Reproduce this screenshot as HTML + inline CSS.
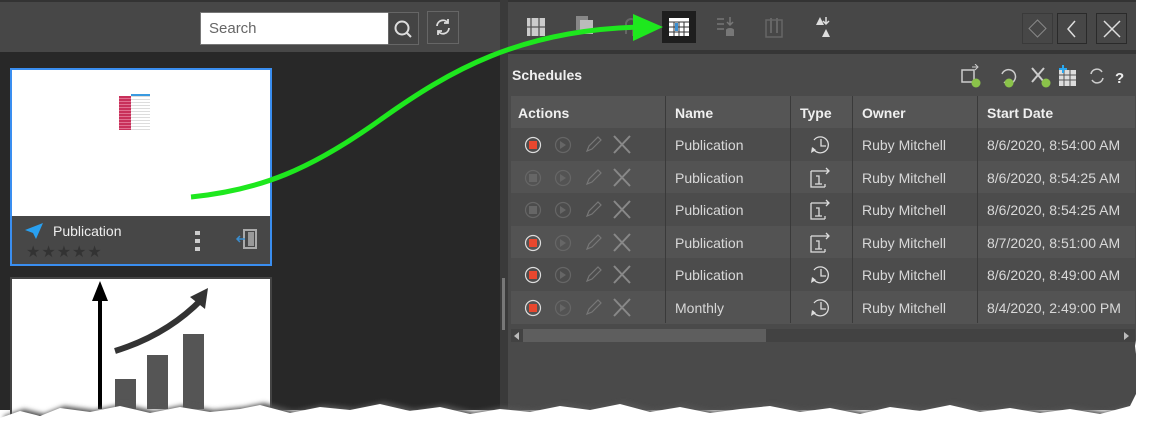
<!DOCTYPE html>
<html><head><meta charset="utf-8"><style>
*{margin:0;padding:0;box-sizing:border-box}
body{width:1167px;height:436px;background:#fff;position:relative;overflow:hidden;font-family:"Liberation Sans",sans-serif}
.abs{position:absolute}
.t{color:#d8d8d8;font-size:14px}
.hd{color:#f0f0f0;font-size:14px;font-weight:bold}
</style></head><body>
<div class="abs" style="left:0;top:0;width:502px;height:410px;background:#282828"></div>
<div class="abs" style="left:0;top:0;width:500px;height:52px;background:#474747;border-top:2px solid #333"></div>
<div class="abs" style="left:200px;top:12px;width:189px;height:33px;background:#fff;border:1px solid #777"></div>
<div class="abs" style="left:209px;top:20px;color:#666;font-size:15px">Search</div>
<div class="abs" style="left:388px;top:12px;width:31px;height:33px;border:1px solid #666;background:#444"></div>
<svg class="abs" style="left:392px;top:18px" width="22" height="22"><circle cx="10" cy="10" r="6.5" fill="none" stroke="#ddd" stroke-width="2"/><line x1="14.5" y1="14.5" x2="19" y2="19" stroke="#ddd" stroke-width="2"/></svg>
<div class="abs" style="left:427px;top:11px;width:32px;height:33px;border:1px solid #666"></div>
<svg class="abs" style="left:433px;top:17px" width="20" height="20"><path d="M4 9a6 6 0 0 1 11-3M16 11a6 6 0 0 1-11 3" fill="none" stroke="#ddd" stroke-width="1.8"/><path d="M15 2v4h-4M5 18v-4h4" fill="none" stroke="#ddd" stroke-width="1.8"/></svg>
<div class="abs" style="left:10px;top:68px;width:262px;height:198px;border:2px solid #3a8ef0;background:#fff"></div>
<div class="abs" style="left:119px;top:96px;width:12px;height:34px;background:repeating-linear-gradient(#c8305a 0 2px,#e07090 2px 3px)"></div>
<div class="abs" style="left:131px;top:96px;width:19px;height:34px;background:repeating-linear-gradient(#ddd 0 1px,#fff 1px 3px)"></div>
<div class="abs" style="left:131px;top:94px;width:19px;height:2px;background:#3a9ae0"></div>
<div class="abs" style="left:12px;top:216px;width:258px;height:48px;background:#474747"></div>
<svg class="abs" style="left:24px;top:222px" width="20" height="18"><path d="M1 8L19 1 12 17 9 11z" fill="#29a0f0"/></svg>
<div class="abs" style="left:53px;top:223px;color:#eee;font-size:14px">Publication</div>
<div class="abs" style="left:26px;top:242px;color:#333;font-size:16px;letter-spacing:1px">★★★★★</div>
<div class="abs" style="left:195px;top:231px;width:5px;height:20px;background:repeating-linear-gradient(#ccc 0 4px,transparent 4px 8px)"></div>
<svg class="abs" style="left:235px;top:228px" width="24" height="22"><rect x="9" y="2" width="12" height="18" fill="none" stroke="#aaa" stroke-width="2"/><rect x="13" y="4" width="6" height="14" fill="#999"/><path d="M2 11h8M5 8l-3 3 3 3" fill="none" stroke="#3a8ed0" stroke-width="1.5"/></svg>
<div class="abs" style="left:10px;top:277px;width:262px;height:140px;border:2px solid #444;background:#fff"></div>
<svg class="abs" style="left:12px;top:279px" width="258" height="130"><path d="M88 130V12" stroke="#000" stroke-width="4"/><path d="M80 22L88 2 96 22z" fill="#000"/><rect x="103" y="100" width="21" height="30" fill="#555"/><rect x="135" y="76" width="21" height="54" fill="#555"/><rect x="171" y="55" width="21" height="75" fill="#555"/><path d="M103 72Q155 56 190 20" fill="none" stroke="#333" stroke-width="6"/><path d="M178 18L196 9 193 30z" fill="#333"/></svg>
<div class="abs" style="left:500px;top:0;width:8px;height:410px;background:#3a3a3a"></div>
<div class="abs" style="left:502px;top:278px;width:3px;height:52px;background:#777"></div>
<div class="abs" style="left:508px;top:0;width:640px;height:410px;background:#4a4a4a"></div>
<div class="abs" style="left:508px;top:0;width:640px;height:54px;background:#474747;border-top:2px solid #333;border-bottom:4px solid #363636"></div>
<svg class="abs" style="left:525px;top:16px" width="22" height="22"><rect x="2" y="2" width="18" height="18" fill="#ccc"/><path d="M6 2v18M2 11h18M14 2v18" stroke="#555" stroke-width="1.3"/></svg>
<svg class="abs" style="left:574px;top:14px" width="22" height="22"><rect x="2" y="2" width="12" height="14" fill="#888"/><rect x="6" y="6" width="13" height="14" fill="#bbb"/></svg>
<svg class="abs" style="left:622px;top:16px" width="22" height="22"><path d="M4 18V8a5 5 0 0 1 10 0" fill="none" stroke="#666" stroke-width="2"/><rect x="10" y="12" width="8" height="8" fill="#665"/></svg>
<div class="abs" style="left:662px;top:11px;width:34px;height:32px;background:#1e1e1e"></div>
<svg class="abs" style="left:669px;top:18px" width="20" height="18"><rect x="0" y="0" width="20" height="18" fill="#fff"/><path d="M0 4h20M5 4v14M10 4v14M15 4v14M0 9h20M0 14h20" stroke="#333" stroke-width="1"/><rect x="6" y="5" width="3" height="8" fill="#3a8ed0"/></svg>
<svg class="abs" style="left:715px;top:16px" width="22" height="22"><path d="M2 3h7M2 8h7M2 13h7" stroke="#777" stroke-width="1.5"/><path d="M15 1v8M12 6l3 3 3-3" stroke="#777" fill="none" stroke-width="1.5"/><ellipse cx="15" cy="14" rx="4" ry="2" fill="#777"/><rect x="11" y="14" width="8" height="6" fill="#777"/></svg>
<svg class="abs" style="left:763px;top:15px" width="22" height="24"><rect x="3" y="5" width="16" height="17" fill="none" stroke="#666" stroke-width="1.5"/><path d="M8 3v15M14 3v15" stroke="#666" stroke-width="2"/></svg>
<svg class="abs" style="left:812px;top:15px" width="22" height="24"><path d="M4 10l4-8 4 8z M10 22l4-8 4 8z" fill="#ddd"/><path d="M14 2v7M11 6l3 3 3-3" stroke="#ddd" fill="none" stroke-width="1.5"/></svg>
<div class="abs" style="left:1022px;top:13px;width:31px;height:31px;border:1px solid #3a3a3a"></div>
<div class="abs" style="left:1031px;top:22px;width:13px;height:13px;border:1px solid #888;transform:rotate(45deg)"></div>
<div class="abs" style="left:1057px;top:13px;width:30px;height:31px;border:1px solid #2a2a2a"></div>
<svg class="abs" style="left:1064px;top:19px" width="16" height="20"><path d="M11 2L4 10l7 8" fill="none" stroke="#ddd" stroke-width="1.5"/></svg>
<div class="abs" style="left:1096px;top:13px;width:31px;height:31px;border:1px solid #2a2a2a"></div>
<svg class="abs" style="left:1102px;top:19px" width="20" height="20"><path d="M2 2l16 16M18 2L2 18" stroke="#ddd" stroke-width="1.5"/></svg>
<div class="abs hd" style="left:512px;top:67px;font-size:14px">Schedules</div>
<svg class="abs" style="left:960px;top:64px" width="165" height="24">
<rect x="2" y="6" width="12" height="12" fill="none" stroke="#ccc" stroke-width="1.5"/><path d="M12 3h6M15 0l3 3-3 3" stroke="#ccc" fill="none"/><circle cx="16" cy="19" r="4.5" fill="#8bc34a"/>
<path d="M42 10a7 7 0 1 1 2 8" fill="none" stroke="#ccc" stroke-width="1.5"/><circle cx="49" cy="19" r="4.5" fill="#8bc34a"/>
<path d="M72 4l12 14M84 4L72 18" stroke="#ccc" stroke-width="2"/><circle cx="86" cy="19" r="4.5" fill="#8bc34a"/>
<rect x="99" y="6" width="17" height="16" fill="#ddd"/><path d="M99 11h17M99 16h17M104 6v16M110 6v16" stroke="#555"/><path d="M103 1v8M99 5h8" stroke="#29a8f0" stroke-width="2"/>
<path d="M131 10a6 6 0 0 1 11-2M143 14a6 6 0 0 1-11 2" fill="none" stroke="#ccc" stroke-width="1.6"/>
<text x="155" y="19" fill="#eee" font-size="15" font-weight="bold" font-family="Liberation Sans">?</text></svg>
<div class="abs" style="left:511px;top:96px;width:624px;height:32px;background:#555"></div>
<div class="abs hd" style="left:518px;top:105px">Actions</div>
<div class="abs hd" style="left:675px;top:105px">Name</div>
<div class="abs hd" style="left:800px;top:105px">Type</div>
<div class="abs hd" style="left:862px;top:105px">Owner</div>
<div class="abs hd" style="left:987px;top:105px">Start Date</div>
<div id="rows"></div>
<div class="abs" style="left:665px;top:96px;width:1px;height:227px;background:#3a3a3a"></div>
<div class="abs" style="left:790px;top:96px;width:1px;height:227px;background:#3a3a3a"></div>
<div class="abs" style="left:852px;top:96px;width:1px;height:227px;background:#3a3a3a"></div>
<div class="abs" style="left:977px;top:96px;width:1px;height:227px;background:#3a3a3a"></div>
<div class="abs" style="left:511px;top:329px;width:624px;height:13px;background:#424242"></div>
<div class="abs" style="left:523px;top:329px;width:243px;height:13px;background:#5e5e5e"></div>
<div class="abs" style="left:514px;top:332px;width:0;height:0;border:4px solid transparent;border-right:5px solid #bbb;border-left:0"></div>
<div class="abs" style="left:1124px;top:332px;width:0;height:0;border:4px solid transparent;border-left:5px solid #bbb;border-right:0"></div>
<script>
var d=[["Publication","c","8/6/2020, 8:54:00 AM",1],["Publication","1","8/6/2020, 8:54:25 AM",0],["Publication","1","8/6/2020, 8:54:25 AM",0],["Publication","1","8/7/2020, 8:51:00 AM",1],["Publication","c","8/6/2020, 8:49:00 AM",1],["Monthly","c","8/4/2020, 2:49:00 PM",1]];
var h="";d.forEach(function(r,i){var y=128+i*32.5;var bg=i%2?"#535353":"#4c4c4c";
h+='<div class="abs" style="left:511px;top:'+y+'px;width:624px;height:33px;background:'+bg+'"></div>';
h+='<svg class="abs" style="left:520px;top:'+(y+6)+'px" width="120" height="22"><circle cx="13" cy="11" r="7.5" fill="none" stroke="'+(r[3]?'#ddd':'#666')+'" stroke-width="1.2"/><rect x="9" y="7" width="8" height="8" fill="'+(r[3]?'#e8472e':'#666')+'"/><circle cx="43" cy="11" r="7.5" fill="none" stroke="#666" stroke-width="1.2"/><path d="M40 7l6 4-6 4z" fill="#666"/><path d="M67 17l2-5 9-9 3 3-9 9z" fill="none" stroke="#777" stroke-width="1.2"/><path d="M94 2l16 17M110 2L94 19" stroke="#888" stroke-width="2"/></svg>';
h+='<div class="abs t" style="left:675px;top:'+(y+9)+'px">'+r[0]+'</div>';
h+=r[1]=="c"?'<svg class="abs" style="left:808px;top:'+(y+6)+'px" width="24" height="22"><path d="M5 14A8 8 0 1 0 6 6" fill="none" stroke="#ddd" stroke-width="1.3"/><path d="M13 5v7h5" fill="none" stroke="#ddd" stroke-width="1.3"/><path d="M3 19l1-6 4 3z" fill="#ddd"/></svg>':'<svg class="abs" style="left:808px;top:'+(y+6)+'px" width="24" height="22"><path d="M3 4v16h14M3 4h9M17 17v3" fill="none" stroke="#ddd" stroke-width="1.3"/><path d="M12 4h8M18 1l3 3-3 3" fill="none" stroke="#ddd" stroke-width="1.3"/><path d="M8 9h3v8M7 17h7" fill="none" stroke="#ddd" stroke-width="1.3"/></svg>';
h+='<div class="abs t" style="left:862px;top:'+(y+9)+'px">Ruby Mitchell</div><div class="abs t" style="left:987px;top:'+(y+9)+'px">'+r[2]+'</div>';});
document.getElementById("rows").innerHTML=h;
</script>
<svg class="abs" style="left:0;top:0" width="1167" height="436"><path d="M191 197C260 190 310 170 380 120S520 30 640 27" fill="none" stroke="#1ee81e" stroke-width="5"/><path d="M633 14L663 27 633 41z" fill="#1ee81e"/></svg>
<svg class="abs" style="left:0;top:0" width="1167" height="436">
<defs><filter id="s"><feGaussianBlur stdDeviation="2.5"/></filter></defs>
<path d="M0 412L20 405 40 410 60 402 90 406 120 400 150 407 180 401 210 406 240 403 260 399 290 407 320 401 350 404 380 398 410 405 440 401 470 408 500 403 530 406 560 400 590 404 620 398 650 406 680 401 710 407 740 403 770 400 800 406 830 402 860 408 890 401 920 405 950 399 980 406 1010 402 1040 407 1070 403 1100 408 1130 400 1140 380 1135 340 1142 300 1136 260 1143 220 1137 180 1144 140 1138 100 1145 60 1140 20 1146 0H1167V436H0z" fill="#555" filter="url(#s)" transform="translate(4,4)"/>
<path d="M0 412L20 405 40 410 60 402 90 406 120 400 150 407 180 401 210 406 240 403 260 399 290 407 320 401 350 404 380 398 410 405 440 401 470 408 500 403 530 406 560 400 590 404 620 398 650 406 680 401 710 407 740 403 770 400 800 406 830 402 860 408 890 401 920 405 950 399 980 406 1010 402 1040 407 1070 403 1100 408 1130 400 1140 380 1135 340 1142 300 1136 260 1143 220 1137 180 1144 140 1138 100 1145 60 1140 20 1146 0H1167V436H0z" fill="#fff" transform="translate(0,6)"/>
<path d="M1136 0H1167V436H1130V0z" fill="#fff" transform="translate(6,0)"/>
</svg>
</body></html>
